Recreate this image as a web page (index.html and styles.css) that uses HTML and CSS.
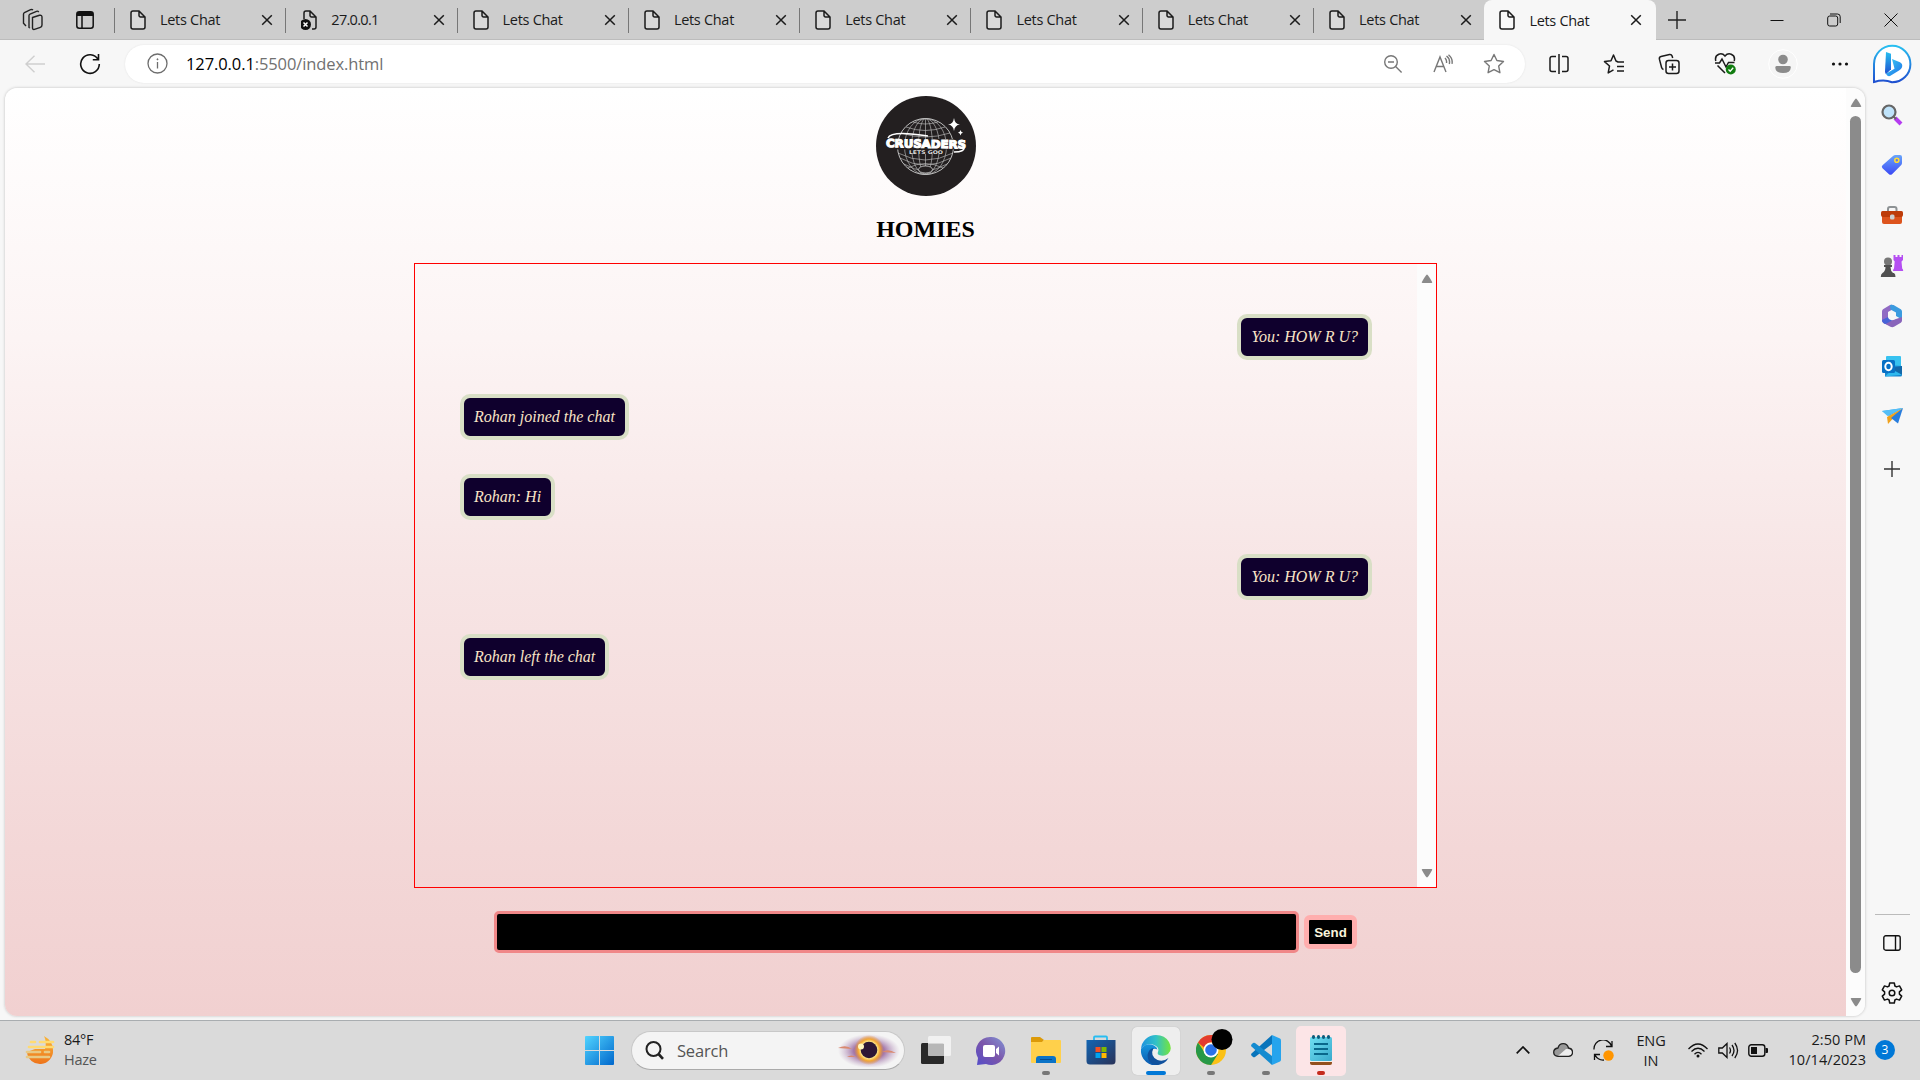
FILE: index.html
```html
<!DOCTYPE html>
<html lang="en">
<head>
<meta charset="utf-8">
<title>Lets Chat</title>
<link rel="stylesheet" href="styles.css">
</head>
<body>
<svg class="defs" width="0" height="0">
  <defs>
    <symbol id="page" viewBox="0 0 16 20"><path d="M1 3a2 2 0 0 1 2-2h6l6 6v10a2 2 0 0 1-2 2H3a2 2 0 0 1-2-2zM9 1v4.500a1.500 1.500 0 0 0 1.500 1.500H15" fill="#fff" fill-opacity=".25" stroke="#1b1b1b" stroke-width="1.500"/></symbol>
    <symbol id="x" viewBox="0 0 12 12"><path d="M1.200 1.200l9.600 9.600M10.800 1.200l-9.600 9.600" stroke="#1b1b1b" stroke-width="1.500"/></symbol>
    <symbol id="up" viewBox="0 0 12 9"><path d="M6 .5Q7 .5 11.300 8.300Q11 9 10.500 9H1.500Q1 9 .7 8.300Q5 .5 6 .5z" fill="#8b8b8b"/></symbol>
  </defs>
</svg>
<div class="window">
  <header class="tabstrip">
    <div class="tab-tools">
      <svg width="22" height="24" viewBox="0 0 22 24" fill="none" stroke="#222" stroke-width="1.400"><path d="M10.500 9.500l7-2.200q2.500-.6 2.500 1.800v8q0 1.800-1.700 2.300l-5.800 2q-2 .5-2-1.700z"/><path d="M8 20l-1-.6V7.600q0-1 1-1.500l6.500-2.800q1.500-.5 2.200.8M4 18l-2.500-2.700V6.200q0-1 .9-1.500l6.200-3q1.500-.5 2.400.4"/></svg>
      <svg width="18" height="18" viewBox="0 0 18 18" fill="none" stroke="#111" stroke-width="1.500"><rect x=".8" y=".8" width="16.400" height="16.400" rx="2.500"/><path d="M1 3h16" stroke-width="4"/><path d="M6 5v12"/></svg>
    </div>
    <div class="tab"><svg class="doc"><use href="#page"/></svg><span>Lets Chat</span><svg class="close"><use href="#x"/></svg></div>
    <div class="tab"><svg class="doc" viewBox="0 0 16 20"><path d="M3 9V3a2 2 0 0 1 2-2h4l6 6v10a2 2 0 0 1-2 2h-2M9 1v4.500A1.500 1.500 0 0 0 10.500 7H15" fill="none" stroke="#1b1b1b" stroke-width="1.500"/><circle cx="4.500" cy="14.500" r="5.500" fill="#111"/><path d="M2.500 12.500l4 4M6.500 12.500l-4 4" stroke="#fff" stroke-width="1.500"/></svg><span class="num">27.0.0.1</span><svg class="close"><use href="#x"/></svg></div>
    <div class="tab"><svg class="doc"><use href="#page"/></svg><span>Lets Chat</span><svg class="close"><use href="#x"/></svg></div>
    <div class="tab"><svg class="doc"><use href="#page"/></svg><span>Lets Chat</span><svg class="close"><use href="#x"/></svg></div>
    <div class="tab"><svg class="doc"><use href="#page"/></svg><span>Lets Chat</span><svg class="close"><use href="#x"/></svg></div>
    <div class="tab"><svg class="doc"><use href="#page"/></svg><span>Lets Chat</span><svg class="close"><use href="#x"/></svg></div>
    <div class="tab"><svg class="doc"><use href="#page"/></svg><span>Lets Chat</span><svg class="close"><use href="#x"/></svg></div>
    <div class="tab"><svg class="doc"><use href="#page"/></svg><span>Lets Chat</span><svg class="close"><use href="#x"/></svg></div>
    <div class="tab active"><svg class="doc"><use href="#page"/></svg><span>Lets Chat</span><svg class="close"><use href="#x"/></svg></div>
    <svg class="newtab" width="18" height="18" viewBox="0 0 18 18" stroke="#222" stroke-width="1.400"><path d="M9 0v18M0 9h18"/></svg>
    <div class="win-buttons">
      <svg width="14" height="14" viewBox="0 0 14 14" stroke="#111"><path d="M.5 7.500h13"/></svg>
      <svg width="14" height="14" viewBox="0 0 14 14" stroke="#111" fill="none"><rect x=".7" y="3" width="10" height="10" rx="2"/><path d="M3 1h7.500a2.700 2.700 0 0 1 2.700 2.700V10"/></svg>
      <svg width="14" height="14" viewBox="0 0 14 14" stroke="#111"><path d="M.5.5l13 13M13.500.5l-13 13"/></svg>
    </div>
  </header>

  <div class="toolbar">
    <div class="nav">
      <svg width="20" height="18" viewBox="0 0 20 18" fill="none" stroke="#cfcfcf" stroke-width="1.400"><path d="M20 9H1M9.500.8L1 9l8.500 8.200"/></svg>
      <svg width="22" height="22" viewBox="0 0 22 22" fill="none" stroke="#111" stroke-width="1.600"><path d="M19 6.300A9.300 9.300 0 1 0 20.300 11M19.500 1v5.700h-5.700"/></svg>
    </div>
    <div class="address">
      <svg width="21" height="21" viewBox="0 0 21 21" fill="none" stroke="#6d6d6d" stroke-width="1.300"><circle cx="10.500" cy="10.500" r="9.500"/><path d="M10.500 9v6.500"/><circle cx="10.500" cy="6.300" r=".6" fill="#6d6d6d" stroke-width=".8"/></svg>
      <span class="url"><b>127.0.0.1</b>:5500/index.html</span>
      <div class="address-icons">
        <svg width="20" height="20" viewBox="0 0 20 20" fill="none" stroke="#777" stroke-width="1.400"><circle cx="8" cy="8" r="6.300"/><path d="M12.600 12.600l6 6M5 8h6"/></svg>
        <svg width="20" height="20" viewBox="0 0 20 20" fill="none" stroke="#777" stroke-width="1.400"><path d="M1 18L7 3l6 15M3.200 12.500h7.600M12 4q2 2 1.500 5M13.500 2q4 3 2.800 8M15.500.8q4.500 3.500 3.500 9"/></svg>
        <svg width="22" height="22" viewBox="0 0 22 22" fill="none" stroke="#777" stroke-width="1.400" stroke-linejoin="round"><path d="M11 1.500l2.900 6 6.600 1-4.800 4.600 1.200 6.600L11 16.600l-5.900 3.100 1.200-6.600L1.500 8.500l6.600-1z"/></svg>
      </div>
    </div>
    <div class="browser-icons">
      <svg width="22" height="22" viewBox="0 0 22 22" fill="none" stroke="#1b1b1b" stroke-width="1.500"><path d="M8 3.500H4a2 2 0 0 0-2 2v11a2 2 0 0 0 2 2h4M14 3.500h4a2 2 0 0 1 2 2v11a2 2 0 0 1-2 2h-4M11 1v20"/></svg>
      <svg width="22" height="22" viewBox="0 0 22 22" fill="none" stroke="#1b1b1b" stroke-width="1.500" stroke-linejoin="round"><path d="M21 9h-6l-2-1L10.500 2 8 7.800l-6.500.8 5 4.400-1.300 6.900 5.300-3M14 13.500h7M14 18h7"/></svg>
      <svg width="22" height="22" viewBox="0 0 22 22" fill="none" stroke="#1b1b1b" stroke-width="1.500"><rect x="8" y="7.500" width="13" height="13" rx="2.500"/><path d="M14.500 10.500v7M11 14h7M5.500 16.500Q4 16 3.600 14.500L1.400 6.200Q1 4 3 3.500l8.500-2q2-.3 2.600 1.500l.6 2"/></svg>
      <svg width="23" height="23" viewBox="0 0 23 23" fill="none" stroke="#1b1b1b" stroke-width="1.500"><path d="M1.800 9Q.5 4 4.800 2.200 8.500 1 11 4q2.500-3 6.200-1.800 4.300 1.800 3 6.800M3.500 13.500l7.500 7.500M1 11h4.500l2.500-4 4 8 2.500-4.500h6"/><circle cx="16.800" cy="17.500" r="5" fill="#117c10" stroke="none"/><path d="M14.500 17.500l1.700 1.700 3-3.400" stroke="#fff" stroke-width="1.300"/></svg>
      <svg class="avatar" width="30" height="30" viewBox="0 0 30 30"><circle cx="15" cy="15" r="14.300" fill="#f5f5f5" stroke="#fff"/><circle cx="15" cy="10.500" r="4.800" fill="#8b8b8b"/><path d="M8.500 17h13a1.400 1.400 0 0 1 1.300 1.500Q22.500 24 15 24t-7.700-5.500A1.400 1.400 0 0 1 8.500 17z" fill="#8b8b8b"/></svg>
      <svg width="18" height="6" viewBox="0 0 18 6" fill="#111"><circle cx="2.500" cy="3" r="1.600"/><circle cx="9" cy="3" r="1.600"/><circle cx="15.500" cy="3" r="1.600"/></svg>
      <svg class="bing" width="40" height="48" viewBox="0 -1 40 48"><defs><linearGradient id="bg1" x1="0" y1="0" x2="0" y2="1"><stop offset="0" stop-color="#28bff0"/><stop offset="1" stop-color="#1f50d0"/></linearGradient><linearGradient id="bg2" x1="0" y1="0" x2="1" y2="1"><stop offset="0" stop-color="#39d2f4"/><stop offset="1" stop-color="#1e6fe8"/></linearGradient></defs><path d="M2 41V23A18.200 18.200 0 1 1 20 41.200Q12 38 2 41z" fill="#fff" stroke="url(#bg1)" stroke-width="2"/><path d="M14 11l5 1.800v15.400l-5 5q-1-1-1-3z" fill="url(#bg1)"/><path d="M20 18l8 3.300q3 1.700 2 5-.6 2-3 3.300L18 35q-3 .8-4-2.300l8.500-5z" fill="url(#bg2)"/></svg>
    </div>
  </div>

  <div class="body">
    <div class="viewport">
      <main class="chat-page">
        <svg class="logo" width="100" height="100" viewBox="0 0 100 100">
          <circle cx="50" cy="50" r="50" fill="#231f20"/>
          <g fill="none" stroke="#bcbcbc" stroke-width=".65">
            <circle cx="49.500" cy="50.500" r="28" stroke-width="1"/>
            <ellipse cx="49.500" cy="50.500" rx="21" ry="28"/><ellipse cx="49.500" cy="50.500" rx="14" ry="28"/><ellipse cx="49.500" cy="50.500" rx="7" ry="28"/><path d="M49.500 22v56"/>
            <path d="M37 26q12 4 25 0M30 31q19 7 39 0M25 37q24 8 49 0M22 57q27 14 55 0M24 62q25 14 51 0M28 68q21 13 43 0M32 72q17-9 35 0"/>
          </g>
          <ellipse cx="49.500" cy="73.500" rx="7" ry="3.500" fill="#231f20" stroke="#ccc" stroke-width=".8"/>
          <path d="M10 43h81v10.500H67V58H32v-4.500H11z" fill="#231f20"/>
          <path d="M12 42q3-8 40-2M78 56q11 0 10-5" fill="none" stroke="#fff" stroke-width="1.500"/>
          <text x="10" y="51.800" textLength="80" lengthAdjust="spacingAndGlyphs" transform="rotate(1 50 50)" class="logo-name">CRUSADERS</text>
          <text x="33" y="57.600" textLength="34" lengthAdjust="spacingAndGlyphs" class="logo-tag">LETS GOO</text>
          <path d="M78 22q.8 6 6 6.500-5.200.5-6 6.500-.8-6-6-6.500 5.200-.5 6-6.500zM84.500 34q.4 2.300 2.500 2.700-2.100.4-2.500 2.700-.4-2.300-2.500-2.700 2.100-.4 2.500-2.700z" fill="#fff"/>
        </svg>
        <h1>HOMIES</h1>
        <section class="chat">
          <div class="messages">
            <div class="message right">You: HOW R U?</div>
            <div class="message">Rohan joined the chat</div>
            <div class="message">Rohan: Hi</div>
            <div class="message right">You: HOW R U?</div>
            <div class="message">Rohan left the chat</div>
          </div>
          <div class="scrollbar"><svg class="arrow"><use href="#up"/></svg><svg class="arrow down"><use href="#up"/></svg></div>
        </section>
        <form class="send">
          <input type="text" aria-label="Message">
          <button type="button">Send</button>
        </form>
      </main>
      <div class="scrollbar page-scroll"><svg class="arrow"><use href="#up"/></svg><div class="thumb"></div><svg class="arrow down"><use href="#up"/></svg></div>
    </div>
    <aside class="sidebar">
      <div class="side-item"><svg width="22" height="22" viewBox="0 0 22 22"><path d="M14 14l6 6" stroke="#b53cf0" stroke-width="4"/><path d="M12.500 12.500l2.500 2.500" stroke="#666" stroke-width="2"/><circle cx="8" cy="8" r="6.500" fill="#bfe3fa" stroke="#666" stroke-width="2.200"/></svg></div>
      <div class="side-item"><svg width="22" height="22" viewBox="0 0 22 22"><defs><linearGradient id="tg" x1="0" y1="0" x2="0" y2="1"><stop offset="0" stop-color="#68a5fb"/><stop offset="1" stop-color="#3b49f5"/></linearGradient></defs><path d="M12 2q1-1 2.500-1H19q2 0 2 2v6q0 1.300-1 2.200l-9 9q-1.500 1.300-3 0l-6.500-6q-1.500-1.500 0-3z" fill="url(#tg)"/><circle cx="15.800" cy="6.300" r="2" fill="#6277e8" stroke="#ffdc35" stroke-width="1.600"/></svg></div>
      <div class="side-item"><svg width="24" height="20" viewBox="0 0 24 20"><path d="M8 6V4q0-2 2-2h4.500q2 0 2 2v2" fill="none" stroke="#8d9294" stroke-width="2"/><path d="M2 10h20v7q0 2-2 2H4q-2 0-2-2z" fill="#dd541d"/><path d="M2.500 6h19Q23 6 23 7.500V10q0 2-2 2H3q-2 0-2-2V7.500Q1 6 2.500 6z" fill="#bd3c0a"/><rect x="10" y="9.500" width="4.500" height="5" rx="1.500" fill="#ccd0d2"/></svg></div>
      <div class="side-item"><svg width="24" height="24" viewBox="0 0 24 24"><path d="M13.500 1h2v2h2V1h2v2h2V1H23v5l-1.500 1.500.7 7q1 .5 1 2.500H13q0-2 1-2.500l.7-7L13.500 6z" fill="#b54ff2"/><circle cx="8" cy="7.500" r="4" fill="#777"/><path d="M4 11h8v2h-1.500q0 4 2.500 6h1q1.500 1 1.500 4H.8q0-3 1.700-4 3-2 3-6H4z" fill="#505050"/></svg></div>
      <div class="side-item"><svg width="22" height="24" viewBox="0 0 22 24"><path d="M9 1L2 5.200Q1 6 1 7.500v9q0 1.500 1.200 2.200L7 21V8l6-3.500V1.300Q11 .2 9 1z" fill="#906ac4"/><path d="M9 1q2-.8 4 .3l6.800 4Q21 6 21 7.500v8L15 12V8.500L9.500 5.500z" fill="#3b9bdf"/><path d="M21 13v3.500q0 1.500-1.200 2.300l-6.800 4q-1.800.8-3.600 0L2.500 19 15 15z" fill="#8965bb"/><path d="M1 16l6-3 4 3.500L4.500 20Q1 19 1 16z" fill="#4763d7"/><circle cx="11" cy="12" r="4" fill="#f7f7f7"/></svg></div>
      <div class="side-item"><svg width="22" height="22" viewBox="0 0 22 22"><rect x="5" y="1" width="15" height="12" rx="1" fill="#37c2f0"/><path d="M4 10l17 1v9q0 1.500-1.500 1.500H4z" fill="#1686cf"/><path d="M21 11v9L10 13z" fill="#1368a9"/><path d="M4 21.500l17-1.800-10-5z" fill="#2eb8ed"/><rect x="1" y="5" width="13" height="13" rx="1.500" fill="#0871c5"/><ellipse cx="7.500" cy="11.500" rx="3.200" ry="3.700" fill="none" stroke="#fff" stroke-width="2"/></svg></div>
      <div class="side-item"><svg width="23" height="18" viewBox="0 0 23 18"><path d="M1 4L22 1 8 9z" fill="#36aaf2"/><path d="M22 1L6 10l1 7 4.500-5z" fill="#f0a21d"/><path d="M22 1L10 11l7 5.500z" fill="#287ddd"/><path d="M1 4l21-3L6.500 9z" fill="#56bff7"/></svg></div>
      <div class="side-item plus"><svg width="16" height="16" viewBox="0 0 16 16" stroke="#333" stroke-width="1.400"><path d="M8 0v16M0 8h16"/></svg></div>
      <div class="side-bottom">
        <svg width="18" height="16" viewBox="0 0 18 16" fill="none" stroke="#111" stroke-width="1.400"><rect x=".8" y=".8" width="16.400" height="14.400" rx="2"/><path d="M12.500 1v14"/></svg>
        <svg width="22" height="22" viewBox="0 0 22 22" fill="none" stroke="#111" stroke-width="1.500" stroke-linejoin="round"><circle cx="11" cy="11" r="2.800"/><path d="M8.700 1h4.600l.6 3 1.600.9 3-1 2.200 4-2.300 2v2.200l2.300 2-2.200 4-3-1-1.600.9-.6 3H8.700l-.6-3-1.600-.9-3 1-2.200-4 2.300-2V9.900l-2.300-2 2.200-4 3 1L8.100 4z"/></svg>
      </div>
    </aside>
  </div>

  <footer class="taskbar">
    <div class="weather">
      <svg width="30" height="30" viewBox="0 0 30 30"><defs><linearGradient id="wg" x1="0" y1="0" x2="0" y2="1"><stop offset="0" stop-color="#f8b63a"/><stop offset="1" stop-color="#ee741b"/></linearGradient></defs><path d="M19 1q9 5 9 14a13 13 0 0 1-26 2l8-3h10q2-7-1-13z" fill="url(#wg)"/><g stroke="#ffdb72" stroke-width="2.700" stroke-linecap="round"><path d="M6 7h4M15 7h13M4 12h24"/><g stroke="#e8ca85"><path d="M2 17h13M20 17h4M2 22h22"/></g></g></svg>
      <div class="weather-text"><span>84°F</span><span class="muted">Haze</span></div>
    </div>
    <div class="apps">
      <svg width="29" height="29" viewBox="0 0 29 29"><defs><linearGradient id="win" x1="0" y1="0" x2="1" y2="1"><stop offset="0" stop-color="#51d4ff"/><stop offset="1" stop-color="#0067cc"/></linearGradient></defs><path d="M1 0h13v14H0V1q0-1 1-1zM15 0h13q1 0 1 1v13H15zM0 15h14v14H1q-1 0-1-1zM15 15h14v13q0 1-1 1H15z" fill="url(#win)"/></svg>
      <div class="search">
        <svg width="19" height="19" viewBox="0 0 19 19" fill="none" stroke="#222" stroke-width="2"><circle cx="8.500" cy="8" r="7"/><path d="M13.500 13l4.500 4.800" stroke-width="2.600"/></svg>
        <span>Search</span>
        <svg class="eclipse" width="64" height="34" viewBox="0 0 64 34"><defs><radialGradient id="ec"><stop offset="0" stop-color="#884b8d"/><stop offset=".5" stop-color="#9c6ba2" stop-opacity=".9"/><stop offset="1" stop-color="#c0a5c5" stop-opacity="0"/></radialGradient><radialGradient id="sun"><stop offset=".55" stop-color="#ffe98b"/><stop offset=".72" stop-color="#f3a735"/><stop offset="1" stop-color="#e68d30" stop-opacity="0"/></radialGradient></defs><ellipse cx="33" cy="18" rx="31" ry="17" fill="url(#ec)"/><path d="M2 15q8-4 14 1zM11 24h9q-5-3-9 0zM46 19q6-4 14 1z" fill="#d98970"/><circle cx="33" cy="17" r="15" fill="url(#sun)"/><circle cx="33" cy="17" r="8.300" fill="#2e1735"/><circle cx="25" cy="13.500" r="3" fill="#fff6bf"/></svg>
      </div>
      <svg class="a1" width="30" height="29" viewBox="0 0 30 29"><rect x="0" y="7" width="23" height="21" rx="1.500" fill="#292929"/><rect x="7" y="0" width="23" height="20" rx="1.500" fill="#f4f4f4" fill-opacity=".85"/><path d="M7 8h16v12H8.500Q7 20 7 18.500z" fill="#aaa" fill-opacity=".7"/></svg>
      <svg class="a2" width="30" height="30" viewBox="0 0 30 30"><defs><linearGradient id="ch" x1="1" y1="0" x2="0" y2="1"><stop offset="0" stop-color="#8296d6"/><stop offset=".5" stop-color="#7b55aa"/><stop offset="1" stop-color="#544dca"/></linearGradient></defs><path d="M15 1a14 14 0 1 1-5 27l-9 1 1-7A14 14 0 0 1 15 1z" fill="url(#ch)"/><rect x="7" y="9" width="12" height="12" rx="2" fill="#fff"/><path d="M20 13l3-2.500v9L20 17z" fill="#fff"/></svg>
      <div class="app run"><svg width="30" height="30" viewBox="0 0 30 30"><path d="M0 3q0-1 1-1h8l4 3-3 4H0z" fill="#dc9a08"/><path d="M0 7h11l2-2h16q1 0 1 1v21q0 1-1 1H1q-1 0-1-1z" fill="#ffd04b"/><path d="M5 28v-4q0-3 3-3h14q3 0 3 3v4z" fill="#0b73c7"/><path d="M9 24.500h12" stroke="#064c91"/></svg></div>
      <div class="app"><svg width="30" height="30" viewBox="0 0 30 30"><defs><linearGradient id="st" x1="0" y1="0" x2="1" y2="1"><stop offset="0" stop-color="#1265b3"/><stop offset="1" stop-color="#293258"/></linearGradient></defs><path d="M8 6V2.500Q8 1.500 9 1.500h11q1 0 1 1V6" fill="none" stroke="#28bdf1" stroke-width="1.800"/><path d="M.5 5h29v21q0 3.500-3.500 3.500H4Q.5 29.500.5 26z" fill="url(#st)"/><path d="M9.500 12h5v5h-5z" fill="#f25022"/><path d="M15.500 12h5v5h-5z" fill="#7fba00"/><path d="M9.500 18h5v5h-5z" fill="#00a4ef"/><path d="M15.500 18h5v5h-5z" fill="#ffb900"/></svg></div>
      <div class="app run current"><svg width="30" height="30" viewBox="0 0 30 30"><defs><linearGradient id="e1"><stop offset="0" stop-color="#1d91df"/><stop offset=".5" stop-color="#31c1c8"/><stop offset="1" stop-color="#75e53b"/></linearGradient><linearGradient id="e2" x1="0" y1="0" x2="0" y2="1"><stop offset="0" stop-color="#1597df"/><stop offset="1" stop-color="#0b57ad"/></linearGradient></defs><path d="M0 14A15 15 0 0 1 15 0q9 0 13 7 4 8-1 12-4 3-9 1-2-1-1-3 1.500-4-2-6-8-5-15 3z" fill="url(#e1)"/><path d="M0 14q5-7 13-3.500 3 1.500 3.500 4Q11 12 10 18q0 8 9 12A15 15 0 0 1 0 14z" fill="url(#e2)"/><path d="M12.500 13q-4 8 4 12 6 2 11-2-4 7-12 7-9-1-9-10 1-6 6-7z" fill="#10519d"/></svg></div>
      <div class="app run"><svg class="chrome" width="38" height="38" viewBox="0 0 38 38"><circle cx="15" cy="23" r="15" fill="#fbc116"/><path d="M2 15.500A15 15 0 0 1 28 15.500H15q-5 0-7 5z" fill="#e33b2e"/><path d="M2 15.500A15 15 0 0 0 15 38l7-11-13-1z" fill="#279847"/><circle cx="15" cy="23" r="7.500" fill="#fff"/><circle cx="15" cy="23" r="5.800" fill="#2b72e8"/><circle cx="26" cy="12.500" r="10.500" fill="#000"/></svg></div>
      <div class="app run"><svg width="30" height="30" viewBox="0 0 30 30"><path d="M21 0l8 3.500q1 .5 1 2v19q0 1.500-1 2L21 30z" fill="#26a4ed"/><path d="M21 0v9L4 22q-1 .7-2 0l-1.500-1.500q-.8-1 0-2z" fill="#0874bb"/><path d="M21 30v-9L4 8q-1-.7-2 0L.5 9.500q-.8 1 0 2z" fill="#148bd0"/></svg></div>
      <div class="app run alert"><svg width="22" height="30" viewBox="0 0 22 30"><defs><linearGradient id="np" x1="0" y1="0" x2="1" y2="1"><stop offset="0" stop-color="#70dff2"/><stop offset="1" stop-color="#39a9cc"/></linearGradient></defs><path d="M0 24h22v4q0 2-2 2H2q-2 0-2-2z" fill="#93501d"/><path d="M0 24h22v3H0z" fill="#f8efe5"/><rect y="2" width="22" height="24" rx="1.500" fill="url(#np)"/><path d="M4 9h14M4 14h14M4 19h14" stroke="#09678b" stroke-width="2"/><g fill="#0d5c7b"><ellipse cx="3.500" cy="2" rx="1.600" ry="2"/><ellipse cx="8.500" cy="2" rx="1.600" ry="2"/><ellipse cx="13.500" cy="2" rx="1.600" ry="2"/><ellipse cx="18.500" cy="2" rx="1.600" ry="2"/></g></svg></div>
    </div>
    <div class="tray">
      <svg width="14" height="8" viewBox="0 0 14 8" fill="none" stroke="#111" stroke-width="1.700"><path d="M.7 7.300L7 1l6.300 6.300"/></svg>
      <svg class="cloud" width="20" height="14" viewBox="0 0 20 14"><path d="M5 13.300Q.7 13 .7 9.300T5 5q1-4.300 5.200-4.300T15.500 5q4 .5 4 4.300t-4 4z" fill="#999"/><path d="M5 13l8-7q6-.5 6.300 3.300 0 4-4 4z" fill="#eee"/><path d="M5 13.300Q.7 13 .7 9.300T5 5q1-4.300 5.200-4.300T15.500 5q4 .5 4 4.300t-4 4z" fill="none" stroke="#222" stroke-width="1.300"/></svg>
      <svg class="sync" width="21" height="21" viewBox="0 0 21 21" fill="none" stroke="#111" stroke-width="1.300"><path d="M1 9.500A9 9 0 0 1 18.500 6M19 1v5.500h-6M1.500 20v-5.500H7M2 15q3 5.500 9 5"/><circle cx="15.500" cy="15.500" r="5.200" fill="#ff9500" stroke="none"/></svg>
      <div class="lang"><span>ENG</span><span>IN</span></div>
      <svg width="20" height="15" viewBox="0 0 20 15" fill="none" stroke="#111" stroke-width="1.300"><path d="M.5 6Q10-4 19.500 6M3.500 8.500q6.500-6.500 13 0M6.500 11.200q3.500-3.700 7 0"/><circle cx="10" cy="13" r="1.500" fill="#111" stroke="none"/></svg>
      <svg class="sound" width="21" height="17" viewBox="0 0 21 17" fill="none" stroke="#111" stroke-width="1.300"><path d="M.8 6v5h3.500L9 15.500v-14L4.300 6zM11.500 5.500q2 3 0 6M14 3q4 5.500 0 11M16.800 1q5.500 7.500 0 15"/></svg>
      <svg class="battery" width="20" height="13" viewBox="0 0 20 13"><rect x=".8" y=".8" width="16" height="11.400" rx="2.500" fill="none" stroke="#111" stroke-width="1.400"/><path d="M3 3h6v7H3z" fill="#111"/><path d="M17.500 4H19q1 0 1 1v3q0 1-1 1h-1.500z" fill="#111"/></svg>
      <div class="clock"><span class="time">2:50 PM</span><span class="date">10/14/2023</span></div>
      <span class="badge">3</span>
    </div>
  </footer>
</div>
</body>
</html>
```
FILE: styles.css
```css
* { box-sizing: border-box; }
body { margin: 0; font-family: "Open Sans", "Noto Sans", sans-serif; color: #1b1b1b; overflow: hidden; }
svg { display: block; flex: none; }
.defs { position: absolute; }
.window { width: 1920px; height: 1080px; display: flex; flex-direction: column; background: #f7f7f7; }

/* Tabs */
.tabstrip { height: 40px; flex: none; display: flex; align-items: center; background: #cdcdcd; border-bottom: 1px solid #bcbcbc; }
.tab-tools { width: 114px; display: flex; align-items: center; gap: 32px; padding-left: 22px; }
.tab { width: 171.300px; height: 39px; display: flex; align-items: center; padding: 0 12px 0 16px; position: relative; font-size: 14.500px; }
.tab::before { content: ""; position: absolute; left: 0; top: 8px; width: 1px; height: 25px; background: #777; }
.tab .doc { width: 16px; height: 20px; margin-right: 14px; }
.tab span { flex: 1; letter-spacing: -.3px; white-space: nowrap; }
.tab .num { letter-spacing: -.7px; }
.tab .close { width: 12px; height: 12px; }
.tab.active { background: #f7f7f7; height: 40px; border-radius: 8px 8px 0 0; margin-bottom: -1px; padding: 0 14px 0 15px; }
.tab.active::before { display: none; }
.newtab { margin-left: 12px; }
.win-buttons { margin-left: auto; display: flex; gap: 43px; margin-right: 22px; }

/* Toolbar */
.toolbar { height: 47px; flex: none; display: flex; align-items: center; }
.nav { width: 125px; display: flex; align-items: center; gap: 34px; padding-left: 25px; }
.address { width: 1400px; height: 38px; background: #fff; border-radius: 19px; display: flex; align-items: center; padding: 0 20px 0 22px; box-shadow: 0 0 2px #e0e0e0; }
.url { margin-left: 18px; font-size: 16.500px; color: #717171; letter-spacing: -.1px; }
.url b { font-weight: 400; color: #000; }
.address-icons { margin-left: auto; display: flex; align-items: center; gap: 30px; }
.browser-icons { flex: 1; display: flex; align-items: center; gap: 33.200px; padding-left: 23px; }
.browser-icons .avatar { margin: 0 0 0 -2px; }
.browser-icons .bing { margin-left: -10px; margin-right: -10px; }

/* Page area */
.body { height: 933px; flex: none; display: flex; }
.viewport { width: 1860px; height: 928px; margin: 1px 0 0 5px; display: flex; border-radius: 12px; overflow: hidden; box-shadow: 0 0 3px #bbb; }
.chat-page { width: 1841px; height: 928px; background: linear-gradient(#fff 0%, #fcf4f4 27%, #f7e5e5 52%, #f3d7d7 82%, #f1d0d0 100%); display: flex; flex-direction: column; align-items: center; padding-top: 8px; font-family: "Liberation Serif", "Times New Roman", serif; }
.logo-name { font: 900 11px "DejaVu Sans", sans-serif; fill: #fff; stroke: #fff; stroke-width: 1.100px; }
.logo-tag { font: 700 5px "DejaVu Sans", sans-serif; fill: #ddd; }
h1 { margin: 20px 0 20px; font-size: 24px; line-height: 27px; color: #000; }
.chat { width: 1023px; height: 625px; flex: none; display: flex; border: 1px solid #f00; }
.messages { width: 1002px; padding: 50px 45px 0; display: flex; flex-direction: column; align-items: flex-start; gap: 34px; }
.message { height: 46px; padding: 10px; border: 4px solid #d9dfc6; border-radius: 10px; background: #0f002d; color: #f9e4c6; font-size: 16px; line-height: 18px; font-style: italic; }
.message.right { align-self: flex-end; }
.scrollbar { width: 19px; background: #fcfcfc; display: flex; flex-direction: column; justify-content: space-between; align-items: center; padding: 10px 0 9px; }
.arrow { width: 12px; height: 9px; }
.arrow.down { transform: rotate(180deg); }
.page-scroll { padding: 10px 0 9px; }
.thumb { width: 11px; height: 857px; margin-top: -16px; background: #8b8b8b; border-radius: 6px; }
.send { display: flex; align-items: center; gap: 5px; margin: 23px 0 0; }
.send input { width: 805px; height: 42px; border: 3px solid #f08788; border-radius: 5px; background: #000; color: #fff; outline: 0; }
.send button { width: 53px; height: 34px; border: 5px solid #ffaeae; border-radius: 6px; background: #000; color: #f8f4dc; padding: 0; font: 700 13.333px "Liberation Sans", Arial, sans-serif; }

/* Edge sidebar */
.sidebar { width: 54px; display: flex; flex-direction: column; align-items: center; padding-top: 3px; }
.side-item { height: 50.200px; display: flex; align-items: center; }
.side-item.plus { margin-top: 3px; }
.side-bottom { width: 35px; margin-top: auto; border-top: 1px solid #bbb; display: flex; flex-direction: column; align-items: center; gap: 31px; padding: 20px 0 16px; }

/* Taskbar */
.taskbar { height: 60px; flex: none; background: #dadada; border-top: 1px solid #a9adb0; display: flex; align-items: center; font-size: 14.500px; }
.weather { width: 585px; display: flex; align-items: center; gap: 9px; padding-left: 25px; }
.weather svg { margin-top: -2px; }
.weather-text { display: flex; flex-direction: column; line-height: 20px; letter-spacing: -.3px; margin-top: -2px; }
.muted { color: #555; }
.apps { display: flex; align-items: center; }
.search { width: 274px; height: 39px; margin: -1px 16px 0 17px; border: 1px solid #c8c8c8; border-bottom-color: #aaa; border-radius: 20px; background: #f4f4f4; display: flex; align-items: center; padding: 0 4px 0 13px; font-size: 16.500px; color: #555; }
.search span { margin-left: 13px; flex: 1; letter-spacing: -.2px; }
.a1 { margin-right: 25px; }
.a2 { margin-right: 16px; }
.app { width: 48px; height: 48px; margin-right: 7px; border-radius: 5px; position: relative; display: flex; align-items: center; justify-content: center; }
.app svg { margin-top: -1px; }
.app.run::after { content: ""; position: absolute; left: 20px; bottom: 0; width: 8px; height: 4px; border-radius: 2px; background: #777; }
.app.current { background: #eee; box-shadow: 0 0 1px #aaa; }
.app.current::after { left: 14px; width: 20px; background: #0078d7; }
.app .chrome { margin: -9px -8px 0 0; }
.app.alert { width: 50px; height: 50px; background: #fce5e7; margin-left: -1px; }
.app.alert::after { left: 21px; background: #c42b1c; bottom: 1px; }
.tray { margin-left: auto; display: flex; align-items: center; margin-right: 25px; }
.tray > svg { margin-top: -1px; }
.tray .cloud { margin-left: 23px; }
.tray .sync { margin: 0 22px 0 20px; }
.lang { width: 30px; margin-right: 22px; display: flex; flex-direction: column; align-items: center; line-height: 20px; letter-spacing: -.1px; }
.tray .sound { margin: -1px 9px 0 10px; }
.clock { width: 78px; margin: -2px 9px 0 20px; display: flex; flex-direction: column; align-items: flex-end; line-height: 20px; letter-spacing: .05px; white-space: nowrap; }
.badge { width: 20px; height: 20px; margin-top: -1px; border-radius: 50%; background: #0078d7; color: #fff; font-size: 12px; line-height: 20px; text-align: center; }
```
